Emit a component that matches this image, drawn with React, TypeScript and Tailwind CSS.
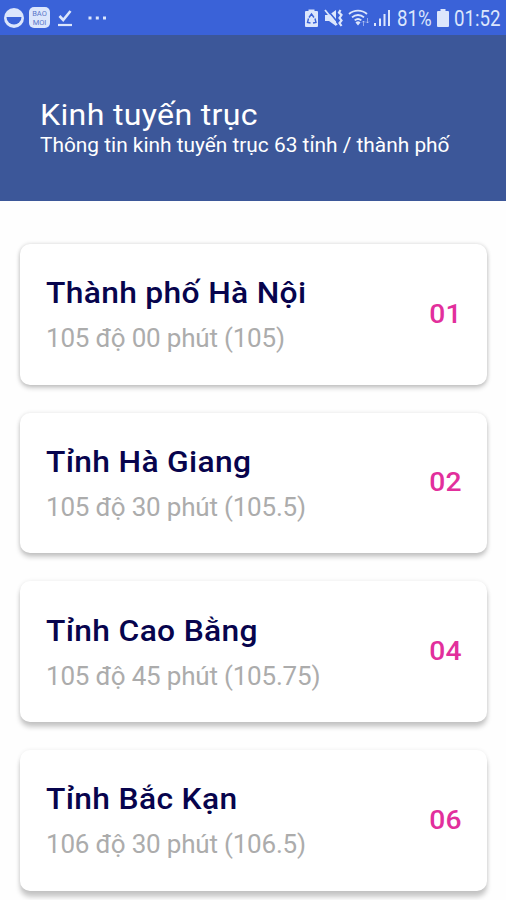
type Province = {
  code: string;
  name: string;
  meridian: string;
  shadow: string;
};

const provinces: Province[] = [
  {
    code: '01',
    name: 'Thành phố Hà Nội',
    meridian: '105 độ 00 phút (105)',
    shadow: 'shadow-[0_3px_5px_rgba(0,0,0,0.2),0_0_4px_rgba(0,0,0,0.14)]',
  },
  {
    code: '02',
    name: 'Tỉnh Hà Giang',
    meridian: '105 độ 30 phút (105.5)',
    shadow: 'shadow-[0_4px_5px_rgba(0,0,0,0.21),0_0_4px_rgba(0,0,0,0.1)]',
  },
  {
    code: '04',
    name: 'Tỉnh Cao Bằng',
    meridian: '105 độ 45 phút (105.75)',
    shadow: 'shadow-[0_5px_5px_rgba(0,0,0,0.21),0_0_4px_rgba(0,0,0,0.08)]',
  },
  {
    code: '06',
    name: 'Tỉnh Bắc Kạn',
    meridian: '106 độ 30 phút (106.5)',
    shadow: 'shadow-[0_6px_5px_rgba(0,0,0,0.21),0_0_4px_rgba(0,0,0,0.07)]',
  },
];

const StatusBar = () => {
  return (
    <div className="h-[35px] shrink-0 bg-[#3a62d8] text-[#dce6fc] flex items-center justify-between pl-1 pr-[6px]">
      <div className="flex items-center">
        <svg width="20" height="20" viewBox="0 0 20 20">
          <circle cx="10" cy="10" r="10" fill="currentColor" />
          <path d="M2.5 9h15a7.5 7.5 0 0 1-15 0z" fill="#3a62d8" />
        </svg>
        <div className="ml-[5px] w-[21px] h-[21px] rounded-[5px] bg-[#dce6fc] flex flex-col items-center justify-center font-['Roboto',sans-serif] text-[7.5px] leading-[9px] text-[#5b77c9]">
          <span>BAO</span>
          <span>MOI</span>
        </div>
        <svg className="ml-[7px]" width="16" height="18" viewBox="0 0 16 18" fill="none" stroke="currentColor">
          <path d="M2.5 7l3.7 4L13.5 2" strokeWidth="2.6" />
          <path d="M1 16h14" strokeWidth="2.2" />
        </svg>
        <svg className="ml-[15px]" width="19" height="4" viewBox="0 0 19 4" fill="currentColor">
          <rect x="0.5" y="0.5" width="3" height="3" />
          <rect x="7.8" y="0.5" width="3" height="3" />
          <rect x="15" y="0.5" width="3" height="3" />
        </svg>
      </div>

      <div className="flex items-center">
        <svg width="13" height="18" viewBox="0 0 13 18">
          <path d="M3.5 2V0.5h6V2H12a1 1 0 0 1 1 1v14a1 1 0 0 1-1 1H1a1 1 0 0 1-1-1V3a1 1 0 0 1 1-1z" fill="currentColor" />
          <path d="M4 8.5L6.5 5l2.5 3.5M10 9.5l1 4-3 .5M5.5 14l-3-.5 1-4" fill="none" stroke="#3a62d8" strokeWidth="1.4" />
        </svg>
        <svg className="ml-[6px]" width="20" height="18" viewBox="0 0 20 18">
          <path d="M1 6h4l7-5v16l-7-5H1z" fill="currentColor" />
          <path d="M2.5 0l11 13" stroke="#3a62d8" strokeWidth="1.6" />
          <path d="M1 1l12 15" stroke="currentColor" strokeWidth="1.8" />
          <path d="M16.5 1L15 3.5 17.5 6l-2 3 2 2.5-2 2.5 2 3" fill="none" stroke="currentColor" strokeWidth="2.2" />
        </svg>
        <svg className="ml-[4px]" width="22" height="19" viewBox="0 0 22 19" fill="none" stroke="currentColor">
          <path d="M1 6a13.5 13.5 0 0 1 18 0" strokeWidth="1.8" />
          <path d="M4 9.3a9 9 0 0 1 12 0" strokeWidth="1.8" />
          <path d="M6.7 12.4a5 5 0 0 1 6.6 0" strokeWidth="1.8" />
          <path d="M7.5 14.5a3.5 3.5 0 0 1 5 0L10 17.5z" fill="currentColor" stroke="none" />
          <path d="M15.5 18v-5M14 14.5l1.5-1.5 1.5 1.5M19.5 10v5M18 13.5l1.5 1.5 1.5-1.5" strokeWidth="1" opacity="0.55" />
        </svg>
        <svg className="ml-[4px]" width="17" height="18" viewBox="0 0 17 18" fill="currentColor">
          <rect x="0" y="14" width="2" height="3" />
          <rect x="5" y="9.5" width="2" height="7.5" />
          <rect x="9.5" y="5" width="2" height="12" />
          <rect x="14" y="1" width="2" height="16" />
        </svg>
        <span className="ml-[6px] mt-[2px] w-[36px] whitespace-nowrap origin-left scale-x-[0.85] font-['Roboto',sans-serif] text-[22px] leading-[22px]">81%</span>
        <svg className="ml-[4px]" width="12" height="18" viewBox="0 0 12 18">
          <path d="M3.5 2V0h5v2H11a1 1 0 0 1 1 1v14a1 1 0 0 1-1 1H1a1 1 0 0 1-1-1V3a1 1 0 0 1 1-1z" fill="currentColor" />
        </svg>
        <span className="ml-[5px] mt-[2px] w-[46px] whitespace-nowrap origin-left scale-x-[0.85] font-['Roboto',sans-serif] text-[22px] leading-[22px]">01:52</span>
      </div>
    </div>
  );
};

const ProvinceCard = ({ province }: { province: Province }) => {
  return (
    <div className={`h-[140.5px] shrink-0 rounded-[10px] bg-white pl-[26px] pr-[25px] pt-px flex items-center justify-between ${province.shadow}`}>
      <div className="whitespace-nowrap">
        <h2 className="origin-left scale-x-[1.06] text-[30px] leading-[36px] font-medium text-[#07044d] tracking-[0.3px]">{province.name}</h2>
        <p className="mt-[11px] text-[26px] leading-[32px] text-[#acacac] tracking-[-0.2px]">{province.meridian}</p>
      </div>
      <span className="origin-right scale-x-[1.13] text-[25px] leading-[30px] font-medium text-[#e22f9c] tracking-[0.3px]">{province.code}</span>
    </div>
  );
};

const App = () => {
  return (
    <div className="w-[506px] h-[900px] overflow-hidden bg-[#fefefe] font-['Roboto','Noto_Sans',sans-serif] flex flex-col">
      <StatusBar />
      <header className="h-[166px] shrink-0 bg-[#3c5799] text-white pl-10 pt-[61px] whitespace-nowrap">
        <h1 className="origin-left scale-x-[1.07] text-[30px] leading-[37px] tracking-[0.3px]">Kinh tuyến trục</h1>
        <p className="origin-left scale-x-[1.043] text-[20px] leading-[24px]">Thông tin kinh tuyến trục 63 tỉnh / thành phố</p>
      </header>
      <main className="flex flex-col gap-[28.2px] pl-5 pr-[19px] pt-[43px]">
        {provinces.map((province) => (
          <ProvinceCard key={province.code} province={province} />
        ))}
      </main>
    </div>
  );
};

export default App;
